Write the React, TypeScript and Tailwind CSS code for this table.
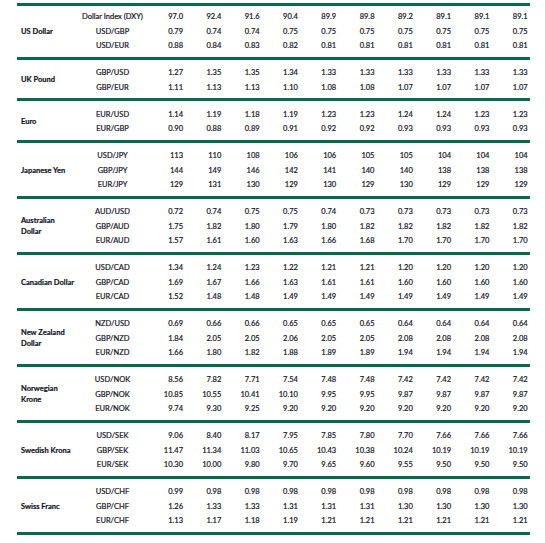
import React from "react";

type Group = { label: React.ReactNode; rows: [string, string[]][] };

const groups: Group[] = [
  {
    label: "US Dollar",
    rows: [
      ["Dollar Index (DXY)", ["97.0", "92.4", "91.6", "90.4", "89.9", "89.8", "89.2", "89.1", "89.1", "89.1"]],
      ["USD/GBP", ["0.79", "0.74", "0.74", "0.75", "0.75", "0.75", "0.75", "0.75", "0.75", "0.75"]],
      ["USD/EUR", ["0.88", "0.84", "0.83", "0.82", "0.81", "0.81", "0.81", "0.81", "0.81", "0.81"]],
    ],
  },
  {
    label: "UK Pound",
    rows: [
      ["GBP/USD", ["1.27", "1.35", "1.35", "1.34", "1.33", "1.33", "1.33", "1.33", "1.33", "1.33"]],
      ["GBP/EUR", ["1.11", "1.13", "1.13", "1.10", "1.08", "1.08", "1.07", "1.07", "1.07", "1.07"]],
    ],
  },
  {
    label: "Euro",
    rows: [
      ["EUR/USD", ["1.14", "1.19", "1.18", "1.19", "1.23", "1.23", "1.24", "1.24", "1.23", "1.23"]],
      ["EUR/GBP", ["0.90", "0.88", "0.89", "0.91", "0.92", "0.92", "0.93", "0.93", "0.93", "0.93"]],
    ],
  },
  {
    label: "Japanese Yen",
    rows: [
      ["USD/JPY", ["113", "110", "108", "106", "106", "105", "105", "104", "104", "104"]],
      ["GBP/JPY", ["144", "149", "146", "142", "141", "140", "140", "138", "138", "138"]],
      ["EUR/JPY", ["129", "131", "130", "129", "130", "129", "130", "129", "129", "129"]],
    ],
  },
  {
    label: (
      <>
        Australian
        <br />
        Dollar
      </>
    ),
    rows: [
      ["AUD/USD", ["0.72", "0.74", "0.75", "0.75", "0.74", "0.73", "0.73", "0.73", "0.73", "0.73"]],
      ["GBP/AUD", ["1.75", "1.82", "1.80", "1.79", "1.80", "1.82", "1.82", "1.82", "1.82", "1.82"]],
      ["EUR/AUD", ["1.57", "1.61", "1.60", "1.63", "1.66", "1.68", "1.70", "1.70", "1.70", "1.70"]],
    ],
  },
  {
    label: "Canadian Dollar",
    rows: [
      ["USD/CAD", ["1.34", "1.24", "1.23", "1.22", "1.21", "1.21", "1.20", "1.20", "1.20", "1.20"]],
      ["GBP/CAD", ["1.69", "1.67", "1.66", "1.63", "1.61", "1.61", "1.60", "1.60", "1.60", "1.60"]],
      ["EUR/CAD", ["1.52", "1.48", "1.48", "1.49", "1.49", "1.49", "1.49", "1.49", "1.49", "1.49"]],
    ],
  },
  {
    label: (
      <>
        New Zealand
        <br />
        Dollar
      </>
    ),
    rows: [
      ["NZD/USD", ["0.69", "0.66", "0.66", "0.65", "0.65", "0.65", "0.64", "0.64", "0.64", "0.64"]],
      ["GBP/NZD", ["1.84", "2.05", "2.05", "2.06", "2.05", "2.05", "2.08", "2.08", "2.08", "2.08"]],
      ["EUR/NZD", ["1.66", "1.80", "1.82", "1.88", "1.89", "1.89", "1.94", "1.94", "1.94", "1.94"]],
    ],
  },
  {
    label: (
      <>
        Norwegian
        <br />
        Krone
      </>
    ),
    rows: [
      ["USD/NOK", ["8.56", "7.82", "7.71", "7.54", "7.48", "7.48", "7.42", "7.42", "7.42", "7.42"]],
      ["GBP/NOK", ["10.85", "10.55", "10.41", "10.10", "9.95", "9.95", "9.87", "9.87", "9.87", "9.87"]],
      ["EUR/NOK", ["9.74", "9.30", "9.25", "9.20", "9.20", "9.20", "9.20", "9.20", "9.20", "9.20"]],
    ],
  },
  {
    label: "Swedish Krona",
    rows: [
      ["USD/SEK", ["9.06", "8.40", "8.17", "7.95", "7.85", "7.80", "7.70", "7.66", "7.66", "7.66"]],
      ["GBP/SEK", ["11.47", "11.34", "11.03", "10.65", "10.43", "10.38", "10.24", "10.19", "10.19", "10.19"]],
      ["EUR/SEK", ["10.30", "10.00", "9.80", "9.70", "9.65", "9.60", "9.55", "9.50", "9.50", "9.50"]],
    ],
  },
  {
    label: "Swiss Franc",
    rows: [
      ["USD/CHF", ["0.99", "0.98", "0.98", "0.98", "0.98", "0.98", "0.98", "0.98", "0.98", "0.98"]],
      ["GBP/CHF", ["1.26", "1.33", "1.33", "1.31", "1.31", "1.31", "1.30", "1.30", "1.30", "1.30"]],
      ["EUR/CHF", ["1.13", "1.17", "1.18", "1.19", "1.21", "1.21", "1.21", "1.21", "1.21", "1.21"]],
    ],
  },
];

export default function App() {
  return (
    <div
      className="w-[545px] h-[543px] bg-white pl-[17px] pt-[3px] text-[#14141f] text-[7.5px] [-webkit-text-stroke:0.2px_#14141f]"
      style={{ fontFamily: "Lato, 'Open Sans', sans-serif" }}
    >
      <div className="w-[513px] border-b-[3px] border-[#076a4a]">
        {groups.map((g, gi) => (
          <div
            key={gi}
            className={`flex border-t-[3px] border-[#076a4a] pb-[3.5px] ${gi === 0 ? "pt-[3.5px]" : "pt-[6px]"}`}
          >
            <div className="w-[61px] pl-[4px] flex items-center font-bold leading-[11.5px] whitespace-nowrap">
              <span>{g.label}</span>
            </div>
            <div className="flex flex-col">
              {g.rows.map(([pair, vals], ri) => (
                <div key={ri} className="flex h-[14.5px] items-center">
                  <div className="w-[69px] text-center whitespace-nowrap">{pair}</div>
                  {vals.map((v, vi) => (
                    <div key={vi} className="w-[38.3px] pr-[2.3px] text-right whitespace-nowrap">
                      {v}
                    </div>
                  ))}
                </div>
              ))}
            </div>
          </div>
        ))}
      </div>
    </div>
  );
}
